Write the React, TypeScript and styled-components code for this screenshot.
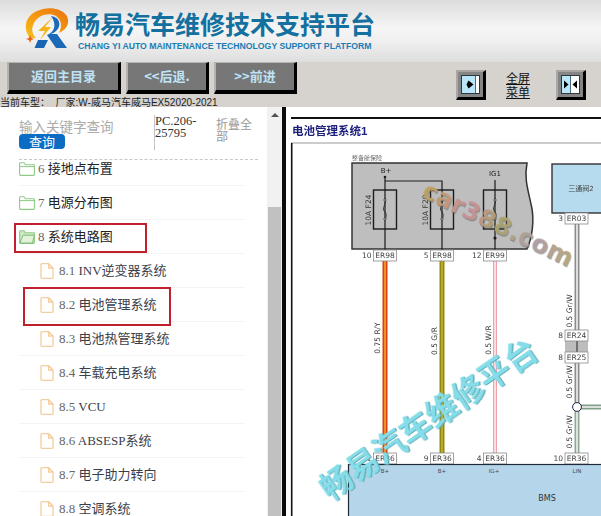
import { createGlobalStyle, styled } from 'styled-components';

const CJK = '"Noto Sans CJK SC", sans-serif';

const GlobalStyle = createGlobalStyle`
  html, body {
    margin: 0;
    padding: 0;
    background: #fff;
  }
  body {
    width: 601px;
    height: 516px;
    overflow: hidden;
    font-family: "Liberation Sans", ${CJK};
  }
`;

interface TreeItem {
  no: string;
  label: string;
  open?: boolean;
}

const folders: TreeItem[] = [
  { no: '6', label: '接地点布置' },
  { no: '7', label: '电源分布图' },
  { no: '8', label: '系统电路图', open: true },
];

const files: TreeItem[] = [
  { no: '8.1', label: 'INV逆变器系统' },
  { no: '8.2', label: '电池管理系统' },
  { no: '8.3', label: '电池热管理系统' },
  { no: '8.4', label: '车载充电系统' },
  { no: '8.5', label: 'VCU' },
  { no: '8.6', label: 'ABSESP系统' },
  { no: '8.7', label: '电子助力转向' },
  { no: '8.8', label: '空调系统' },
];

const Logo = () => (
  <svg width="50" height="44" viewBox="22 6 50 44">
    <defs>
      <linearGradient id="ring" x1="0" y1="1" x2="1" y2="0">
        <stop offset="0" stopColor="#f7c21c" />
        <stop offset="0.45" stopColor="#f59a12" />
        <stop offset="1" stopColor="#e8730c" />
      </linearGradient>
    </defs>
    <path
      d="M30 38 C22 28 25 13 43 9 C57 6 70 13 68 23 C67 28 63 31 59 33 C62 27 62 20 56 16 C49 12 38 15 34 23 C31 29 32 34 36 38 Z"
      fill="url(#ring)"
    />
    <path d="M30 35 L31.2 38 L34 39 L31.2 40 L30 43 L29 40 L26 39 L29 38 Z" fill="#e8620c" />
    <path d="M53 17 L38 31 L45 31 L40 40 L51 27 L45 27 Z" fill="#f3b51a" />
    <path d="M38 40 L48 40 L44 48 L34.5 48 Z" fill="#1a64b4" />
    <path
      d="M51 16 C60 17 62 26 56 31 C54 33 52 34 50 34 L57 34 L67 48 L56 48 L47 35 C53 33 58 26 51 16 Z"
      fill="#1b6ab8"
    />
  </svg>
);

const FolderIcon = ({ open }: { open?: boolean }) => (
  <svg width="16" height="14" viewBox="0 0 16 14">
    <path
      d="M0.6 12.8 V1.6 Q0.6 0.8 1.4 0.8 H5 L6.4 2.8 H14.6 Q15.4 2.8 15.4 3.6 V12.6 Q15.4 13.4 14.6 13.4 H1.4 Z"
      fill={open ? '#cfe8c4' : '#fff'}
      stroke="#8ecb86"
      strokeWidth="1.1"
    />
    {open ? <path d="M1 13 L4 5.2 H15.4 L13.4 13 Z" fill="#e4f2dc" stroke="#7fbe76" /> : <path d="M1 4.6 H15" stroke="#8ecb86" />}
  </svg>
);

const FileIcon = () => (
  <svg width="14" height="16" viewBox="0 0 14 16">
    <path
      d="M1 1.8 Q1 0.7 2 0.7 H8.6 L13 5 V14.2 Q13 15.3 12 15.3 H2 Q1 15.3 1 14.2 Z M8.6 0.7 V5 H13"
      fill="#fff"
      stroke="#f3cd9c"
      strokeWidth="1.3"
    />
  </svg>
);

const ToggleIcon = ({ both }: { both?: boolean }) => (
  <svg width="19" height="19" viewBox="0 0 19 19">
    <rect x="0.5" y="0.5" width="18" height="18" fill="#b9e6f8" stroke="#2c3a40" />
    {both ? (
      <>
        <rect x="9.5" y="1" width="8.5" height="17" fill="#fff" />
        <path d="M9.5 1 V18" stroke="#4a6a76" />
        <path d="M3 5.5 L7.5 9.5 L3 13.5 Z M16 5.5 L11.5 9.5 L16 13.5 Z" fill="#000" />
      </>
    ) : (
      <>
        <rect x="14.5" y="1" width="3.5" height="17" fill="#fff" />
        <path d="M14.5 1 V18" stroke="#4a6a76" />
        <path d="M7.5 5.5 L12.5 9.5 L7.5 13.5 L5.5 9.5 Z" fill="#000" />
      </>
    )}
  </svg>
);

const Connector = ({ x, y, no, name }: { x: number; y: number; no: string; name: string }) => (
  <g>
    <rect x={x} y={y} width="23" height="11" fill="#fff" stroke="#8a8a8a" strokeWidth="0.8" />
    <text x={x + 11.5} y={y + 8.4} fontSize="7.5" textAnchor="middle" fill="#444">
      {name}
    </text>
    <text x={x - 2} y={y + 8.4} fontSize="7.5" textAnchor="end" fill="#444">
      {no}
    </text>
  </g>
);

const Fuse = ({ x, name }: { x: number; name: string }) => (
  <g>
    <rect x={x} y="190" width="23" height="39" fill="none" stroke="#1c1c1c" strokeWidth="1.4" />
    <path
      d={`M${x + 11.5} 198 C${x + 14} 204 ${x + 7} 208 ${x + 11.5} 212 C${x + 14} 215 ${x + 12} 218 ${x + 11.5} 220`}
      fill="none"
      stroke="#222"
      strokeWidth="0.8"
    />
    <circle cx={x + 11.5} cy="200" r="1.2" fill="#bbb" stroke="#222" strokeWidth="0.6" />
    <circle cx={x + 11.5} cy="219" r="1.2" fill="#bbb" stroke="#222" strokeWidth="0.6" />
    {name && (
      <text transform={`translate(${x - 3} 210) rotate(-90)`} fontSize="7.5" textAnchor="middle" fill="#333">
        {name}
      </text>
    )}
  </g>
);

const Wire = ({ x, y1, y2, outer, inner, wide = 5, thin = 1.6 }: { x: number; y1: number; y2: number; outer: string; inner: string; wide?: number; thin?: number }) => (
  <g>
    <path d={`M${x} ${y1} V${y2}`} stroke={outer} strokeWidth={wide} />
    <path d={`M${x} ${y1} V${y2}`} stroke={inner} strokeWidth={thin} />
  </g>
);

const WireLabel = ({ x, y, text }: { x: number; y: number; text: string }) => (
  <text transform={`translate(${x} ${y}) rotate(-90)`} fontSize="7.5" textAnchor="middle" fill="#333">
    {text}
  </text>
);

const Diagram = () => (
  <svg width="315" height="409" viewBox="286 107 315 409" style={{ display: 'block' }}>
    <rect x="291" y="117" width="310" height="2" fill="#111" />
    <text x="292" y="135" fontSize="11.5" fontWeight="700" fill="#1d1f7c" fontFamily={`"Liberation Sans", ${CJK}`}>
      电池管理系统1
    </text>
    <path d="M291 143 H601" stroke="#999" strokeWidth="1" />
    <path d="M291.7 143 V516" stroke="#111" strokeWidth="1.6" />

    <g fontFamily={`"DejaVu Sans", ${CJK}`}>
      <text x="352" y="160" fontSize="6" fill="#666">
        整备舱保险
      </text>
      <path
        d="M352 163 H527 C524 178 528 190 531 204 C535 220 532 238 527 249 H352 Z"
        fill="#bebebe"
        stroke="#333"
        strokeWidth="1.5"
      />
      <text x="386" y="173" fontSize="7" textAnchor="middle" fill="#222">
        B+
      </text>
      <text x="495" y="176" fontSize="7" textAnchor="middle" fill="#222">
        IG1
      </text>
      <path d="M385 176 V250 M385 181 H442 V250 M495 180 V250" fill="none" stroke="#1c1c1c" strokeWidth="1.2" />
      <circle cx="385" cy="177" r="1.3" fill="#1c1c1c" />
      <Fuse x={373.5} name="10A F24" />
      <Fuse x={430.5} name="10A F29" />
      <Fuse x={483.5} name="" />
      <circle cx="495" cy="238" r="1.6" fill="#1c1c1c" />

      <Wire x={385} y1={261} y2={453} outer="#dc3f12" inner="#f2a32c" />
      <Wire x={442} y1={261} y2={453} outer="#8d8a12" inner="#c9b22a" />
      <Wire x={495} y1={261} y2={453} outer="#f0a2aa" inner="#fdf2f2" wide={4} thin={1.5} />
      <Wire x={577} y1={224} y2={330} outer="#8c8c8c" inner="#f2f2f2" />
      <Wire x={577} y1={362} y2={403} outer="#8c8c8c" inner="#f2f2f2" />
      <Wire x={577} y1={411} y2={453} outer="#8fa994" inner="#f2f2f2" />
      <path d="M581 407 H601" stroke="#7f9f86" strokeWidth="5" />
      <path d="M581 407 H601" stroke="#f2f2f2" strokeWidth="1.6" />
      <circle cx="577" cy="407" r="4.4" fill="#fff" stroke="#224" strokeWidth="1" />

      <rect x="565" y="341" width="23" height="11" fill="#bdbdbd" />
      <path d="M577 341 V352" stroke="#222" strokeWidth="1" />

      <rect x="552" y="164" width="60" height="49" fill="#b6dbee" stroke="#333" strokeWidth="1.4" />
      <text x="581" y="191" fontSize="7" textAnchor="middle" fill="#444">
        三通阀2
      </text>

      <Connector x={373.5} y={250} no="10" name="ER98" />
      <Connector x={430.5} y={250} no="5" name="ER98" />
      <Connector x={483.5} y={250} no="12" name="ER99" />
      <Connector x={565} y={213} no="3" name="ER03" />
      <Connector x={565} y={330} no="8" name="ER24" />
      <Connector x={565} y={352} no="8" name="ER25" />
      <Connector x={373.5} y={453} no="1" name="ER36" />
      <Connector x={430.5} y={453} no="9" name="ER36" />
      <Connector x={483.5} y={453} no="4" name="ER36" />
      <Connector x={565} y={453} no="10" name="ER36" />

      <WireLabel x={380} y={338} text="0.75 R/Y" />
      <WireLabel x={437} y={341} text="0.5 G/R" />
      <WireLabel x={491} y={340} text="0.5 W/R" />
      <WireLabel x={572} y={311} text="0.5 Gr/W" />
      <WireLabel x={572} y={382} text="0.5 Gr/W" />
      <WireLabel x={572} y={432} text="0.5 Gr/W" />

      <rect x="348.5" y="464.5" width="260" height="60" fill="#b5d6ea" stroke="#1e2a38" strokeWidth="1.2" />
      <text x="385" y="473" fontSize="5.5" textAnchor="middle" fill="#445">
        B+
      </text>
      <text x="442" y="473" fontSize="5.5" textAnchor="middle" fill="#445">
        B+
      </text>
      <text x="494" y="473" fontSize="5.5" textAnchor="middle" fill="#445">
        IG+
      </text>
      <text x="577" y="473" fontSize="5.5" textAnchor="middle" fill="#445">
        LIN
      </text>
      <text x="547" y="501" fontSize="8" textAnchor="middle" fill="#333">
        BMS
      </text>
    </g>
  </svg>
);

export default function App() {
  return (
    <>
      <GlobalStyle />
      <Page>
        <Banner>
          <Logo />
          <BrandText>
            <BrandTitle>畅易汽车维修技术支持平台</BrandTitle>
            <BrandSub>CHANG YI AUTO MAINTENANCE TECHNOLOGY SUPPORT PLATFORM</BrandSub>
          </BrandText>
        </Banner>

        <Toolbar>
          <ToolbarLeft>
            <NavRow>
              <NavButton $width={114}>返回主目录</NavButton>
              <NavButton $width={83}>&lt;&lt;后退.</NavButton>
              <NavButton $width={83}>&gt;&gt;前进</NavButton>
            </NavRow>
            <Status>当前车型：&nbsp; 厂家:W-威马汽车威马EX52020-2021</Status>
          </ToolbarLeft>
          <ToolbarRight>
            <IconButton>
              <ToggleIcon />
            </IconButton>
            <MenuLink>
              全屏
              <br />
              菜单
            </MenuLink>
            <IconButton>
              <ToggleIcon both />
            </IconButton>
          </ToolbarRight>
        </Toolbar>

        <Main>
          <Side>
            <SearchBar>
              <SearchCol>
                <SearchInput placeholder="输入关键字查询" />
                <SearchButton>查询</SearchButton>
              </SearchCol>
              <CodeText>PC.206-25795</CodeText>
              <Collapse>折叠全部</Collapse>
            </SearchBar>
            <TreeViewport>
              <Tree>
                {folders.map((item) => (
                  <Row key={item.no}>
                    <FolderIcon open={item.open} />
                    <RowText>
                      <Num>{item.no}</Num> {item.label}
                    </RowText>
                  </Row>
                ))}
                {files.map((item) => (
                  <Row key={item.no} $child>
                    <FileIcon />
                    <RowText $child>
                      <Num>{item.no}</Num> {item.label}
                    </RowText>
                  </Row>
                ))}
              </Tree>
            </TreeViewport>
            <Marker $left={14} $top={116} $width={133} $height={30} />
            <Marker $left={23} $top={180} $width={148} $height={39} />
          </Side>

          <Scrollbar>
            <ScrollArrow />
            <ScrollThumb />
          </Scrollbar>
          <Divider />

          <Sheet>
            <Diagram />
            <SiteMark>car388.com</SiteMark>
            <BrandMark>畅易汽车维修平台</BrandMark>
          </Sheet>
        </Main>
      </Page>
    </>
  );
}

const Page = styled.div`
  width: 601px;
  height: 516px;
  display: flex;
  flex-direction: column;
  overflow: hidden;
`;

const Banner = styled.header`
  height: 62px;
  box-sizing: border-box;
  padding: 6px 0 0 22px;
  display: flex;
  align-items: flex-start;
  gap: 1px;
  background: linear-gradient(#dcdcdc 0%, #f5f5f5 45%, #f0f0f0 65%, #dedede 100%);
`;

const BrandText = styled.div`
  display: flex;
  flex-direction: column;
  margin-top: 2px;
  padding-left: 2px;
`;

const BrandTitle = styled.h1`
  margin: 0;
  font-family: ${CJK};
  font-size: 25px;
  line-height: 30px;
  font-weight: 700;
  color: #13709f;
  white-space: nowrap;
`;

const BrandSub = styled.div`
  margin: 2px 0 0 3px;
  font-size: 8.7px;
  line-height: 12px;
  font-weight: 700;
  color: #1b7db4;
  white-space: nowrap;
`;

const Toolbar = styled.div`
  height: 45px;
  display: flex;
  justify-content: space-between;
  background: #d6d3ce;
`;

const ToolbarLeft = styled.div`
  display: flex;
  flex-direction: column;
`;

const NavRow = styled.div`
  display: flex;
  gap: 5px;
  padding-left: 7px;
`;

const NavButton = styled.button<{ $width: number }>`
  width: ${({ $width }) => $width}px;
  height: 32px;
  padding: 0 0 3px;
  box-sizing: border-box;
  border-style: solid;
  border-width: 1px 3px 4px 2px;
  border-color: #b5b3ae #000 #000 #b5b3ae;
  background: #777;
  font-family: ${CJK};
  font-size: 13px;
  font-weight: 700;
  color: #bfe3f6;
`;

const Status = styled.div`
  margin-top: 3px;
  font-size: 10px;
  line-height: 11px;
  color: #222;
  white-space: nowrap;
`;

const ToolbarRight = styled.div`
  display: flex;
  align-items: flex-start;
  gap: 20px;
  padding: 8px 15px 0 0;
`;

const IconButton = styled.button`
  width: 30px;
  height: 30px;
  padding: 0;
  box-sizing: border-box;
  display: flex;
  align-items: center;
  justify-content: center;
  border-style: solid;
  border-width: 2px 3px 3px 2px;
  border-color: #a9a7a3 #000 #000 #a9a7a3;
  background: #858585;

  & > svg {
    width: 19px;
    height: 19px;
  }
`;

const MenuLink = styled.a`
  width: 30px;
  margin-top: 1px;
  font-family: ${CJK};
  font-size: 12px;
  line-height: 14px;
  color: #111;
  text-decoration: underline;
`;

const Main = styled.main`
  flex: 1;
  min-height: 0;
  display: flex;
`;

const Side = styled.aside`
  position: relative;
  width: 267px;
  display: flex;
  flex-direction: column;
`;

const SearchBar = styled.div`
  height: 53px;
  box-sizing: border-box;
  margin: 0 9px 0 19px;
  display: flex;
  align-items: flex-start;
  border-bottom: 1px dashed #c8c8c8;
`;

const SearchCol = styled.div`
  width: 135px;
  padding-top: 11px;
  display: flex;
  flex-direction: column;
  align-items: flex-start;
`;

const SearchInput = styled.input`
  width: 130px;
  height: 16px;
  padding: 0;
  border: 0;
  outline: 0;
  font-family: ${CJK};
  font-size: 13.5px;

  &::placeholder {
    color: #ababab;
  }
`;

const SearchButton = styled.button`
  width: 46px;
  height: 15px;
  padding: 0;
  border: 0;
  border-radius: 4px;
  background: #0b6cc4;
  font-family: ${CJK};
  font-size: 13px;
  line-height: 14px;
  color: #fff;
`;

const CodeText = styled.div`
  width: 61px;
  height: 35px;
  margin-top: 8px;
  border-left: 1px solid #c4c4c4;
  font-family: "Liberation Serif", ${CJK};
  font-size: 12.5px;
  line-height: 12px;
  color: #333;
`;

const Collapse = styled.div`
  width: 37px;
  margin-top: 11px;
  font-family: ${CJK};
  font-size: 12px;
  line-height: 12px;
  color: #999;
`;

const TreeViewport = styled.div`
  flex: 1;
  min-height: 0;
  overflow: hidden;
`;

const Tree = styled.ul`
  list-style: none;
  margin: -8px 22px 0 19px;
  padding: 0;
`;

const Row = styled.li<{ $child?: boolean }>`
  height: 34px;
  box-sizing: border-box;
  padding-left: ${({ $child }) => ($child ? '21px' : '0')};
  display: flex;
  align-items: center;
  gap: ${({ $child }) => ($child ? '5px' : '3px')};
  border-bottom: 1px solid #f3f3f3;
`;

const RowText = styled.span<{ $child?: boolean }>`
  font-family: "Liberation Serif", ${CJK};
  font-size: 13px;
  line-height: 16px;
  color: ${({ $child }) => ($child ? '#3c4048' : '#222')};
  white-space: nowrap;
`;

const Num = styled.span`
  color: #666;
`;

const Marker = styled.div<{ $left: number; $top: number; $width: number; $height: number }>`
  position: absolute;
  left: ${({ $left }) => $left}px;
  top: ${({ $top }) => $top}px;
  width: ${({ $width }) => $width}px;
  height: ${({ $height }) => $height}px;
  box-sizing: border-box;
  border: 2px solid #c21f2c;
`;

const Scrollbar = styled.div`
  width: 15px;
  background: #f1f1f1;
  display: flex;
  flex-direction: column;
`;

const ScrollArrow = styled.div`
  width: 0;
  height: 0;
  margin: 6px auto 0;
  border-left: 4px solid transparent;
  border-right: 4px solid transparent;
  border-bottom: 4px solid #505050;
`;

const ScrollThumb = styled.div`
  flex: 1;
  margin: 90px 1px 0;
  background: #c1c1c1;
`;

const Divider = styled.div`
  width: 4px;
  background: #0c0c0c;
`;

const Sheet = styled.section`
  position: relative;
  flex: 1;
  min-width: 0;
  overflow: hidden;

  & > svg {
    filter: blur(0.25px);
  }
`;

const SiteMark = styled.div`
  position: absolute;
  left: 212px;
  top: 117px;
  transform: translate(-50%, -50%) rotate(25.5deg);
  font-family: "DejaVu Sans", sans-serif;
  font-size: 25px;
  font-weight: 700;
  white-space: nowrap;
  color: transparent;
  background: linear-gradient(90deg, #b9a25a, #c98f9c 30%, #a8a26a 50%, #b0a0a8 75%, #b8a878);
  -webkit-background-clip: text;
  background-clip: text;
  filter: drop-shadow(1px 1px 0 rgba(90, 90, 90, 0.55));
`;

const BrandMark = styled.div`
  position: absolute;
  left: 141px;
  top: 310px;
  transform: translate(-50%, -50%) rotate(-34.7deg);
  font-family: ${CJK};
  font-size: 32px;
  line-height: 40px;
  font-weight: 700;
  white-space: nowrap;
  color: #84dde9;
  text-shadow: 1px 1px 0 #5fa9b4;
  filter: blur(0.3px);
`;
